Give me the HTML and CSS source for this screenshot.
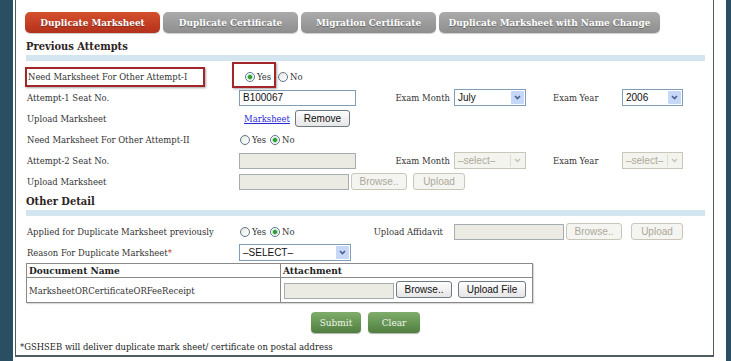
FILE: index.html
```html
<!DOCTYPE html>
<html lang="en">
<head>
<meta charset="UTF-8">
<meta name="viewport" content="width=device-width, initial-scale=1.0">
<title>Duplicate Marksheet</title>
<link rel="stylesheet" href="styles.css">
</head>
<body>
<div class="page">
  <div class="panel">
    <ul class="tabs">
      <li class="tab active">Duplicate Marksheet</li>
      <li class="tab">Duplicate Certificate</li>
      <li class="tab">Migration Certificate</li>
      <li class="tab wide">Duplicate Marksheet with Name Change</li>
    </ul>

    <h3 class="section">Previous Attempts</h3>
    <div class="bar"></div>
    <div class="rows">
      <div class="row">
        <div class="lbl"><span class="mark">Need Marksheet For Other Attempt-I</span></div>
        <div class="ctl radios first">
          <span class="opt boxed"><i class="radio on"></i>Yes</span>
          <span class="opt"><i class="radio"></i>No</span>
        </div>
      </div>
      <div class="row">
        <div class="lbl">Attempt-1 Seat No.</div>
        <div class="ctl"><span class="txt">B100067</span></div>
        <div class="lbl2">Exam Month</div>
        <div class="ctl"><span class="sel month">July<i class="arrow"></i></span></div>
        <div class="lbl3">Exam Year</div>
        <div class="ctl"><span class="sel year">2006<i class="arrow"></i></span></div>
      </div>
      <div class="row">
        <div class="lbl">Upload Marksheet</div>
        <div class="ctl span3"><a class="link" href="#">Marksheet</a><span class="btn remove">Remove</span></div>
      </div>
      <div class="row">
        <div class="lbl">Need Marksheet For Other Attempt-II</div>
        <div class="ctl radios">
          <span class="opt"><i class="radio"></i>Yes</span>
          <span class="opt"><i class="radio on"></i>No</span>
        </div>
      </div>
      <div class="row">
        <div class="lbl">Attempt-2 Seat No.</div>
        <div class="ctl"><span class="txt off"></span></div>
        <div class="lbl2">Exam Month</div>
        <div class="ctl"><span class="sel month off">&ndash;select&ndash;<i class="arrow"></i></span></div>
        <div class="lbl3">Exam Year</div>
        <div class="ctl"><span class="sel year off">&ndash;select&ndash;<i class="arrow"></i></span></div>
      </div>
      <div class="row">
        <div class="lbl">Upload Marksheet</div>
        <div class="ctl span3">
          <span class="txt file off"></span><span class="btn off browse">Browse..</span><span class="btn off upload">Upload</span>
        </div>
      </div>
    </div>

    <h3 class="section small">Other Detail</h3>
    <div class="bar"></div>
    <div class="rows">
      <div class="row">
        <div class="lbl">Applied for Duplicate Marksheet previously</div>
        <div class="ctl radios">
          <span class="opt"><i class="radio"></i>Yes</span>
          <span class="opt"><i class="radio on"></i>No</span>
        </div>
        <div class="lbl2 affidavit">Upload Affidavit</div>
        <div class="ctl span3">
          <span class="txt file off"></span><span class="btn off browse">Browse..</span><span class="btn off upload gap">Upload</span>
        </div>
      </div>
      <div class="row">
        <div class="lbl">Reason For Duplicate Marksheet<b class="req">*</b></div>
        <div class="ctl"><span class="sel reason">&ndash;SELECT&ndash;<i class="arrow"></i></span></div>
      </div>
    </div>

    <table class="docs">
      <tr><th class="c1">Doucument Name</th><th>Attachment</th></tr>
      <tr>
        <td class="c1">MarksheetORCertificateORFeeReceipt</td>
        <td><span class="txt file off"></span><span class="btn browse">Browse..</span><span class="btn upfile">Upload File</span></td>
      </tr>
    </table>

    <div class="actions">
      <span class="gbtn">Submit</span>
      <span class="gbtn">Clear</span>
    </div>
    <p class="note">*GSHSEB will deliver duplicate mark sheet/ certificate on postal address</p>
  </div>
</div>
</body>
</html>
```

FILE: styles.css
```css
body { margin:0; background:#2b4f62; font-family:"DejaVu Serif Condensed","DejaVu Serif",serif; font-size:9.4px; color:#333; }
.page { margin-left:13px; width:699px; height:361px; background:#fff; padding:0 12px 0 2px; }
.panel { border:solid #4f5d63; border-width:0 1px 2px 1px; height:357px; box-sizing:border-box; padding:0 8px 0 10px; }

/* tabs */
.tabs { list-style:none; margin:0; padding:12px 0 0 0; display:flex; gap:3px; margin-left:-1px; }
.tab { width:135px; height:21px; line-height:21px; text-align:center; border-radius:5px; background:linear-gradient(#ababab,#8e8e8e); color:#fff; font-weight:bold; font-size:9.9px; text-shadow:0 1px 1px rgba(0,0,0,.35); box-shadow:0 1px 1px rgba(0,0,0,.2); }
.tab.active { background:linear-gradient(#d5502e,#b3311b); }
.tab.wide { width:221px; }

.section { margin:0; height:22px; line-height:27px; font-size:11px; color:#2e2424; }
.section.small { height:18px; line-height:19px; }
.bar { height:6px; background:#d3e6ef; }

/* form rows */
.rows { margin-top:5px; }
.row { display:grid; grid-template-columns:213px 150px 65px 99px 69px 1fr; height:21px; align-items:center; }
.lbl { padding-left:1px; white-space:nowrap; }
.lbl2 { text-align:right; padding-right:4px; white-space:nowrap; }
.lbl3 { padding-left:0; }
.affidavit { grid-column:3; margin-left:-30px; padding-right:11px; }
.span3 { grid-column:2 / span 3; display:flex; align-items:center; }
.row .affidavit + .span3 { grid-column:4 / span 3; }
.req { color:#c0392b; font-weight:normal; }

.mark { display:block; width:180px; height:20px; line-height:16px; box-sizing:border-box; border:2px solid #a3262a; margin-left:-2px; padding-left:1px; box-shadow:1px 1px 2px rgba(0,0,0,.35); }

.radios { display:flex; align-items:center; gap:4px; padding-left:1px; }
.radios.first { padding-left:6px; gap:7px; }
.opt { display:inline-flex; align-items:center; gap:2px; position:relative; }
.radio { display:inline-block; width:10px; height:10px; box-sizing:border-box; border:1px solid #5a7590; border-radius:50%; background:linear-gradient(135deg,#e8e8e0,#fff); }
.radio.on { background:radial-gradient(circle,#2f9c35 0 1.7px,#a9dca9 2.3px,#fff 3.4px); }
.boxed::before { content:""; position:absolute; left:-13px; top:-9px; width:44px; height:26px; box-sizing:border-box; border:2px solid #a3262a; box-shadow:1px 1px 2px rgba(0,0,0,.35); }

.txt { display:inline-block; width:117px; height:16px; box-sizing:border-box; border:1px solid #7f9db9; font:10px "Liberation Sans",Arial,sans-serif; color:#111; line-height:14px; padding-left:3px; vertical-align:middle; }
.txt.off { background:#ebebe4; border-color:#a5acb2; }
.txt.file { width:110px; }

.sel { position:relative; display:inline-block; height:17px; box-sizing:border-box; border:1px solid #7f9db9; font:10px "Liberation Sans",Arial,sans-serif; color:#111; line-height:15px; padding-left:3px; background:#fff; }
.sel.month { width:72px; }
.sel.year { width:61px; }
.sel.reason { width:112px; }
.sel .arrow { position:absolute; right:1px; top:1px; width:13px; height:13px; background:#c7d7f7 url("data:image/svg+xml,%3Csvg xmlns='http://www.w3.org/2000/svg' width='13' height='13'%3E%3Cpath d='M4 5l2.5 2.5L9 5' fill='none' stroke='%234a5f8c' stroke-width='1.6'/%3E%3C/svg%3E") no-repeat center; border-radius:1px; }
.sel.off { border-color:#c9c7ba; color:#aca899; background:#f4f4ee; }
.sel.off .arrow { background-color:#f4f4ee; background-image:url("data:image/svg+xml,%3Csvg xmlns='http://www.w3.org/2000/svg' width='13' height='13'%3E%3Cpath d='M4 5l2.5 2.5L9 5' fill='none' stroke='%23c3c3b8' stroke-width='1.4'/%3E%3C/svg%3E"); border-left:1px solid #dcdcd2; }

.btn { display:inline-block; height:17px; box-sizing:border-box; border:1px solid #6f7a82; border-radius:3px; background:linear-gradient(#fdfdfd,#e6e6e6); font:10px "Liberation Sans",Arial,sans-serif; color:#111; line-height:15px; text-align:center; }
.btn.off { border-color:#c9c7ba; background:#f4f4f0; color:#aca899; }
.remove { width:55px; margin-left:5px; }
.link { color:#2b2bd6; margin-left:5px; }
.browse { width:56px; margin-left:2px; }
.upload { width:52px; margin-left:6px; }
.upload.gap { margin-left:9px; }
.upfile { width:68px; margin-left:6px; }

/* documents table */
.docs { border-collapse:collapse; width:507px; margin-top:0; box-shadow:1px 1px 1px rgba(0,0,0,.15); }
.docs th, .docs td { border:1px solid #8a8a8a; text-align:left; padding:0 0 0 2px; }
.docs th { height:13px; line-height:12px; font-size:10px; color:#222; }
.docs td { height:24px; }
.docs .c1 { width:251px; }
.docs td .txt { margin-left:1px; }

.actions { display:flex; justify-content:center; gap:7px; margin-top:9px; }
.gbtn { width:50px; height:21px; line-height:21px; text-align:center; border-radius:4px; background:linear-gradient(#80ad6b,#4f7e3f); color:#eef4e8; font-size:10px; box-shadow:0 1px 1px rgba(0,0,0,.3); }
.gbtn + .gbtn { width:52px; }

.note { margin:8px 0 0 -6px; font-size:9.4px; color:#222; }
```
